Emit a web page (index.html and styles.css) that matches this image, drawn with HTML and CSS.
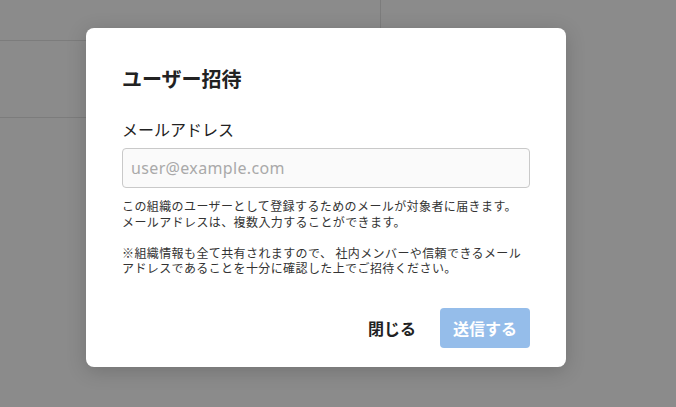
FILE: index.html
```html
<!DOCTYPE html>
<html lang="ja">
<head>
<meta charset="utf-8">
<title>ユーザー招待</title>
<link rel="stylesheet" href="styles.css">
</head>
<body>
<div class="page">
  <div class="panel">
    <div class="panel-head"></div>
    <div class="panel-row"></div>
  </div>
</div>
<div class="modal" role="dialog">
  <h2 class="modal-title">ユーザー招待</h2>
  <label class="field-label" for="email">メールアドレス</label>
  <input class="field-input" id="email" type="text" placeholder="user@example.com">
  <p class="help">この組織のユーザーとして登録するためのメールが対象者に届きます。<br>メールアドレスは、複数入力することができます。<br><br>※組織情報も全て共有されますので、 社内メンバーや信頼できるメール<br>アドレスであることを十分に確認した上でご招待ください。</p>
  <div class="modal-footer">
    <button class="btn btn-close" type="button">閉じる</button>
    <button class="btn btn-send" type="button">送信する</button>
  </div>
</div>
</body>
</html>
```

FILE: styles.css
```css
html, body {
  margin: 0;
  padding: 0;
  height: 100%;
}
body {
  background: #8b8b8b;
  font-family: "Noto Sans CJK JP", "Noto Sans", sans-serif;
  color: #222;
  overflow: hidden;
}
.page {
  height: 100%;
}
.panel {
  width: 381px;
  border-right: 1px solid #7c7c7c;
  box-sizing: border-box;
}
.panel-head {
  height: 40px;
  border-bottom: 1px solid #7c7c7c;
}
.panel-row {
  height: 76px;
  border-bottom: 1px solid #7c7c7c;
}
.modal {
  position: absolute;
  left: 86px;
  top: 28px;
  width: 480px;
  box-sizing: border-box;
  padding: 36px 36px 19px;
  background: #fff;
  border-radius: 8px;
  box-shadow: 0 4px 20px rgba(0, 0, 0, 0.18);
  display: flex;
  flex-direction: column;
}
.modal-title {
  margin: 0;
  font-size: 20px;
  line-height: 30px;
  font-weight: 700;
  color: #222;
}
.field-label {
  margin-top: 23px;
  font-size: 16px;
  line-height: 24px;
  color: #222;
}
.field-input {
  margin-top: 7px;
  height: 40px;
  box-sizing: border-box;
  padding: 0 8px;
  border: 1px solid #c9c9c9;
  border-radius: 4px;
  background: #fafafa;
  font-family: "Noto Sans", "Noto Sans CJK JP", sans-serif;
  font-size: 16px;
  letter-spacing: 0.35px;
  color: #222;
  outline: none;
}
.field-input::placeholder {
  color: #a9a9a9;
}
.help {
  margin: 10px 0 0;
  font-size: 12px;
  line-height: 15.5px;
  letter-spacing: 0.4px;
  color: #333;
}
.modal-footer {
  margin-top: 32px;
  display: flex;
  justify-content: flex-end;
  gap: 8px;
}
.btn {
  height: 40px;
  border: none;
  border-radius: 4px;
  font-family: inherit;
  font-size: 16px;
  font-weight: 700;
  cursor: pointer;
}
.btn-close {
  padding: 0 16px;
  background: transparent;
  color: #222;
}
.btn-send {
  width: 90px;
  padding: 0;
  background: #95bdea;
  color: #fff;
}
```
